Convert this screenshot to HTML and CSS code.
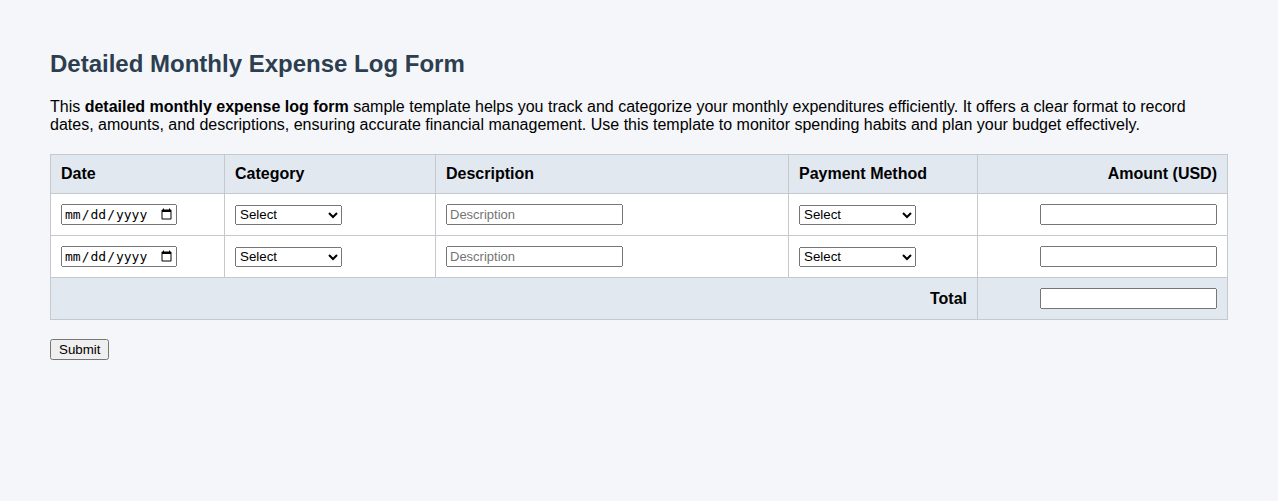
FILE: index.html
```html
<!DOCTYPE html>
<html lang="en">
<head>
  <meta charset="UTF-8" />
  <meta name="viewport" content="width=device-width, initial-scale=1.0" />
  <title>Detailed Monthly Expense Log Form</title>
  <link rel="stylesheet" href="styles.css">
</head>
<body>
  <div class="page">
    <h1>Detailed Monthly Expense Log Form</h1>
    <p class="intro">This <strong>detailed monthly expense log form</strong> sample template helps you track and categorize your monthly expenditures efficiently. It offers a clear format to record dates, amounts, and descriptions, ensuring accurate financial management. Use this template to monitor spending habits and plan your budget effectively.</p>

    <form>
      <table class="expense-table">
        <colgroup>
          <col class="col-date">
          <col class="col-category">
          <col class="col-desc">
          <col class="col-method">
          <col class="col-amount">
        </colgroup>
        <thead>
          <tr>
            <th>Date</th>
            <th>Category</th>
            <th>Description</th>
            <th>Payment Method</th>
            <th class="num">Amount (USD)</th>
          </tr>
        </thead>
        <tbody>
          <tr>
            <td><input type="date" class="date-input"></td>
            <td>
              <select class="cat-select">
                <option>Select</option>
                <option>Housing</option>
                <option>Food</option>
                <option>Transportation</option>
                <option>Utilities</option>
              </select>
            </td>
            <td><input type="text" class="text-input" placeholder="Description"></td>
            <td>
              <select class="method-select">
                <option>Select</option>
                <option>Cash</option>
                <option>Credit Card</option>
                <option>Bank Transfer</option>
              </select>
            </td>
            <td class="num"><input type="text" class="text-input"></td>
          </tr>
          <tr>
            <td><input type="date" class="date-input"></td>
            <td>
              <select class="cat-select">
                <option>Select</option>
                <option>Housing</option>
                <option>Food</option>
                <option>Transportation</option>
                <option>Utilities</option>
              </select>
            </td>
            <td><input type="text" class="text-input" placeholder="Description"></td>
            <td>
              <select class="method-select">
                <option>Select</option>
                <option>Cash</option>
                <option>Credit Card</option>
                <option>Bank Transfer</option>
              </select>
            </td>
            <td class="num"><input type="text" class="text-input"></td>
          </tr>
        </tbody>
        <tfoot>
          <tr>
            <th colspan="4" class="num">Total</th>
            <td class="num"><input type="text" class="text-input"></td>
          </tr>
        </tfoot>
      </table>
      <button type="submit" class="submit-btn">Submit</button>
    </form>
  </div>
</body>
</html>
```

FILE: styles.css
```css
body { margin: 0; background: #f4f6f9; font-family: "Liberation Sans", Arial, sans-serif; color: #000; }
.page { padding: 50px; }
h1 { margin: 0 0 20px; font-size: 24px; line-height: 28px; color: #2c3e50; }
.intro { margin: 0 0 20px; font-size: 16px; line-height: 18px; }

.expense-table { width: 100%; border-collapse: collapse; background: #fff; font-size: 16px; }
.expense-table th, .expense-table td { border: 1px solid #c5c9ce; padding: 10px; text-align: left; }
.expense-table thead th { background: #e1e8f0; height: 18px; }
.expense-table tbody td { height: 21px; }
.expense-table tfoot th, .expense-table tfoot td { background: #e1e8f0; }
.expense-table .num { text-align: right; }

.col-date { width: 174px; }
.col-category { width: 211px; }
.col-desc { width: 353px; }
.col-method { width: 189px; }

.date-input { width: 116px; height: 21px; box-sizing: border-box; font-size: 13px; vertical-align: middle; }
.cat-select { width: 107px; height: 20px; font-size: 13.33px; vertical-align: middle; }
.method-select { width: 117px; height: 20px; font-size: 13.33px; vertical-align: middle; }
.text-input { width: 177px; height: 21px; box-sizing: border-box; font-size: 13px; vertical-align: middle; }

.submit-btn { margin-top: 19px; font-size: 13.33px; padding: 1px 7px; }
```
